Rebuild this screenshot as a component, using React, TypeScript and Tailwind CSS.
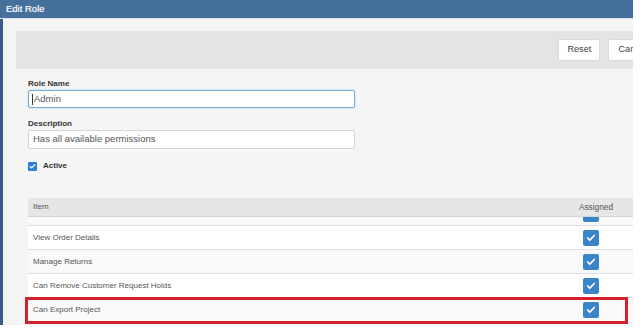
import { Check } from "lucide-react";

const rows = [
  { label: "View Order Details", striped: false },
  { label: "Manage Returns", striped: true },
  { label: "Can Remove Customer Request Holds", striped: false },
  { label: "Can Export Project", striped: true, highlight: true },
];

function BlueCheck() {
  return (
    <div className="flex h-[16px] w-[16px] shrink-0 items-center justify-center rounded-[2px] bg-[#3a84c8]">
      <Check className="h-[10px] w-[10px] text-white" strokeWidth={4} />
    </div>
  );
}

function Row({ label, striped, highlight }: { label: string; striped: boolean; highlight?: boolean }) {
  return (
    <div
      className={`relative flex h-[24px] shrink-0 items-center border-t border-[#e0e0e0] text-[8px] text-[#555] ${
        striped ? "bg-[#f9f9f9]" : "bg-white"
      }`}
    >
      <div className="flex-1 pl-[5px]">{label}</div>
      <div className="flex w-[52px] justify-center pr-[10px]">
        <BlueCheck />
      </div>
      <div className="w-[18px]" />
      {highlight && (
        <div className="absolute -left-[3px] -top-px h-[27px] w-[603px] border-[3px] border-[#d3202e]" />
      )}
    </div>
  );
}

export default function App() {
  return (
    <div className="h-[335px] w-[641px] overflow-hidden bg-white font-['Liberation_Sans',Arial,sans-serif]">
      <div className="flex h-[325px] w-[633px] flex-col overflow-hidden">
        <div className="flex h-[18px] shrink-0 items-center bg-[#46709c] pl-[6px] text-[9.5px] text-white [text-shadow:0_0_1px_rgba(255,255,255,0.6)]">
          Edit Role
        </div>
        <div className="h-px shrink-0 bg-[#dbe7f0]" />
        <div className="flex min-h-0 flex-1 border-l-[3px] border-[#3a5d86] bg-[#f3f5f4] pl-[13px] pt-[12px]">
          <div className="flex w-[649px] shrink-0 flex-col">
            <div className="flex h-[38px] shrink-0 items-center justify-end gap-2 bg-[#e4e4e4] pr-2">
              <button className="h-[22px] rounded-[2px] border border-[#dadada] bg-white px-2 text-[9.2px] text-[#444]">
                Reset
              </button>
              <button className="h-[22px] rounded-[2px] border border-[#dadada] bg-white px-[9px] text-[9.2px] text-[#444]">
                Cancel
              </button>
            </div>
            <div className="flex flex-1 flex-col bg-[#f5f5f5] pl-3 pt-[10px]">
              <div className="h-[10px] text-[8px] font-bold leading-[10px] text-[#333]">Role Name</div>
              <div className="mt-px flex h-[18px] w-[327px] items-center rounded-[2px] border border-[#73aee3] bg-white pl-[3px] text-[9.5px] text-[#555] shadow-[0_0_2px_#9cc8ef]">
                <span className="mr-px h-[11px] w-px bg-[#333]" />
                Admin
              </div>
              <div className="mt-[11px] h-[10px] text-[8px] font-bold leading-[10px] text-[#333]">Description</div>
              <div className="mt-px flex h-[19px] w-[327px] items-center rounded-[2px] border border-[#d6d6d6] bg-white pl-[4px] text-[9.5px] text-[#555]">
                Has all available permissions
              </div>
              <div className="mt-[12px] flex h-[10px] items-center gap-[6px]">
                <div className="flex h-[9px] w-[9px] items-center justify-center rounded-[1px] bg-[#2f7fd6]">
                  <Check className="h-[7px] w-[7px] text-white" strokeWidth={4} />
                </div>
                <span className="text-[8px] font-bold text-[#333]">Active</span>
              </div>
              <div className="mt-[27px] flex w-[612px] flex-col">
                <div className="flex h-[19px] shrink-0 items-center border-b border-[#d4d4d4] bg-[#e6e6e6] text-[8px] text-[#555]">
                  <div className="flex-1 pl-[5px]">Item</div>
                  <div className="w-[52px] text-center text-[8.3px]">Assigned</div>
                  <div className="w-[18px]" />
                </div>
                {/* row scrolled mostly out of view */}
                <div className="flex h-[8px] shrink-0 flex-col justify-end overflow-hidden">
                  <Row label="" striped />
                </div>
                {rows.map((row) => (
                  <Row key={row.label} {...row} />
                ))}
              </div>
            </div>
          </div>
        </div>
      </div>
    </div>
  );
}
